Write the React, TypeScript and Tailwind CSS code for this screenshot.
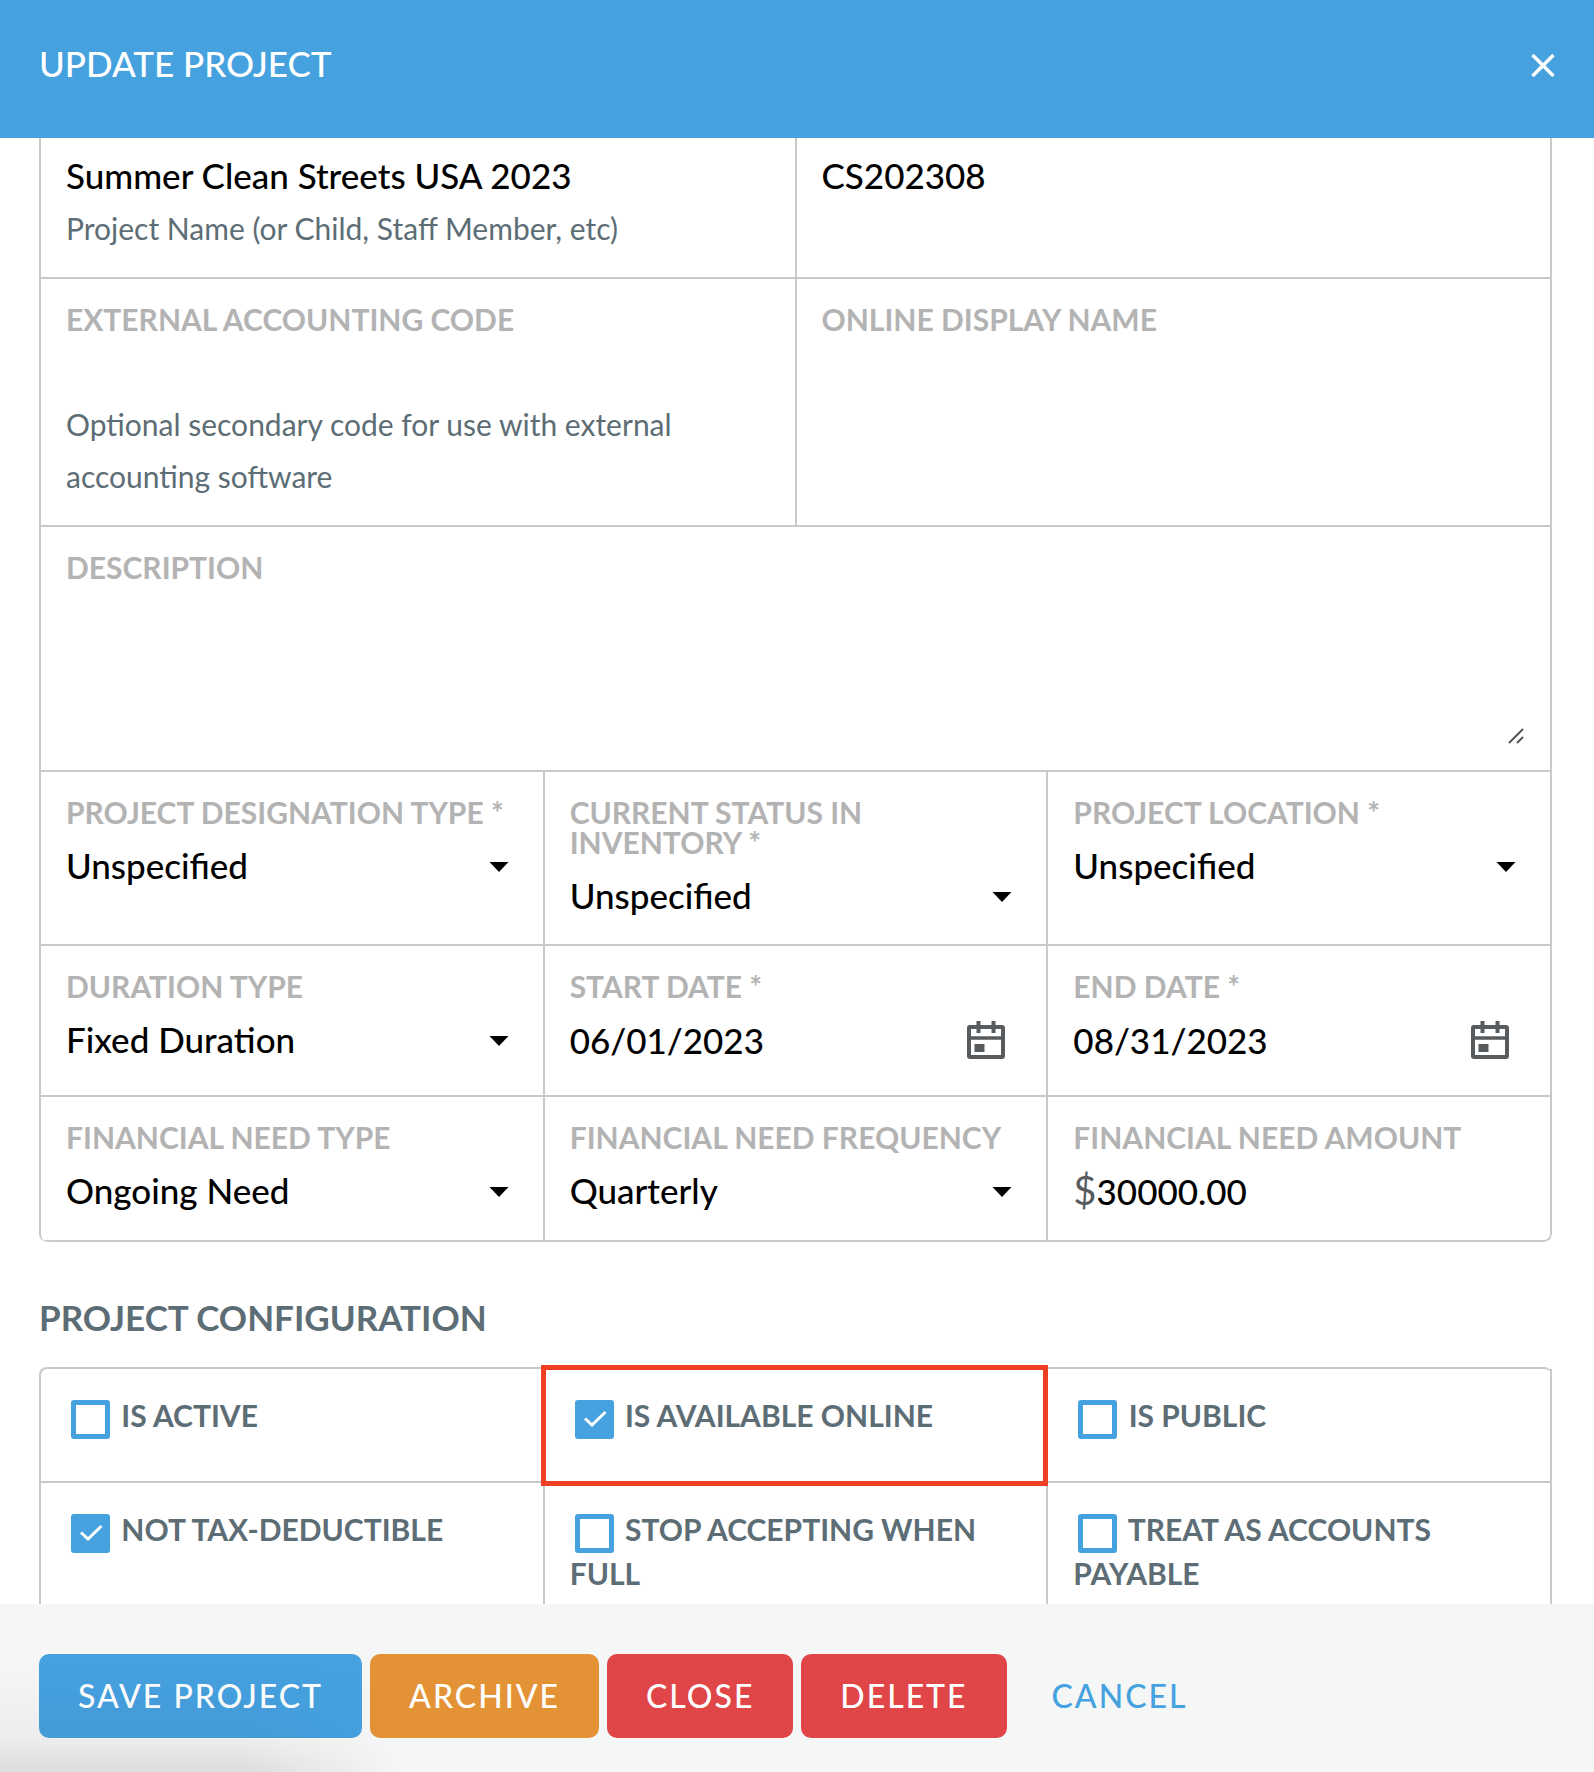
import { useState, type ReactNode } from "react";

const Cell = ({ pad = "pt-[25px] pb-[23px]", children }: { pad?: string; children: ReactNode }) => {
  return (
    <div className={`relative min-w-0 border-r-2 border-b-2 border-[#c9c9c9] px-[25px] ${pad}`}>
      {children}
    </div>
  );
};

const FieldLabel = ({ htmlFor, children }: { htmlFor: string; children: ReactNode }) => {
  return (
    <label htmlFor={htmlFor} className="block text-[30px] leading-[30px] font-bold text-[#b3b3b3] uppercase">
      {children}
    </label>
  );
};

const Help = ({ children }: { children: ReactNode }) => {
  return <p className="text-[30px] leading-[52px] text-[#5d6d75]">{children}</p>;
};

const SelectField = ({ id, label, options }: { id: string; label: string; options: string[] }) => {
  return (
    <Cell>
      <FieldLabel htmlFor={id}>{label}</FieldLabel>
      <div className="relative mt-3">
        <select
          id={id}
          className="block h-[52px] w-full appearance-none bg-transparent text-[35px] leading-[52px] font-medium text-black outline-none"
        >
          {options.map((option) => (
            <option key={option}>{option}</option>
          ))}
        </select>
        <svg
          className="pointer-events-none absolute top-[23px] right-[9px] h-[10px] w-5"
          viewBox="0 0 20 10"
          aria-hidden="true"
        >
          <path d="M0.5 0h19L10 10z" fill="#000" />
        </svg>
      </div>
    </Cell>
  );
};

const DateField = ({ id, label, value }: { id: string; label: string; value: string }) => {
  return (
    <Cell>
      <FieldLabel htmlFor={id}>{label}</FieldLabel>
      <div className="mt-2 mb-[2px] flex h-[61px] items-center pr-[15px]">
        <input
          id={id}
          defaultValue={value}
          className="h-full w-full min-w-0 flex-1 text-[35px] font-medium text-black outline-none"
        />
        <button type="button" aria-label="Open calendar" className="shrink-0">
          <svg className="h-10 w-10" viewBox="0 0 40 40" fill="none" stroke="#575b5e" aria-hidden="true">
            <rect x="3" y="7" width="34" height="30" rx="1" strokeWidth="4" />
            <path d="M3 18h34" strokeWidth="3.5" />
            <path d="M12.5 1v12M27.5 1v12" strokeWidth="4" />
            <rect x="8.5" y="24" width="10" height="8" fill="#575b5e" stroke="none" />
          </svg>
        </button>
      </div>
    </Cell>
  );
};

const CheckField = ({
  id,
  label,
  checked = false,
  highlight = false,
}: {
  id: string;
  label: string;
  checked?: boolean;
  highlight?: boolean;
}) => {
  const [on, setOn] = useState(checked);
  return (
    <Cell pad="pt-6 pb-11">
      <label
        htmlFor={id}
        className="block text-[30px] leading-[44px] font-bold text-[#5d6d75] uppercase"
      >
        <span className="relative -my-2 mr-1 ml-[5px] inline-block h-[39px] w-[39px] align-middle">
          <input
            id={id}
            type="checkbox"
            checked={on}
            onChange={() => setOn(!on)}
            className="block h-full w-full appearance-none rounded-[3px] border-[5px] border-[#46a1df] bg-white checked:bg-[#46a1df]"
          />
          {on && (
            <svg
              className="pointer-events-none absolute inset-0 h-full w-full"
              viewBox="0 0 39 39"
              fill="none"
              stroke="#fff"
              strokeWidth="3"
              aria-hidden="true"
            >
              <path d="M10 18.5l7 6.500L30.500 12" />
            </svg>
          )}
        </span>{" "}
        {label}
      </label>
      {highlight && (
        <div className="pointer-events-none absolute -top-1 -right-[2px] -bottom-[5px] -left-1 z-10 border-[5px] border-[#ed3f24]" />
      )}
    </Cell>
  );
};

const App = () => {
  const actions = [
    { text: "Save Project", color: "bg-[#46a1df]" },
    { text: "Archive", color: "bg-[#e39336]" },
    { text: "Close", color: "bg-[#e04548]" },
    { text: "Delete", color: "bg-[#e04548]" },
  ];

  return (
    <div className="flex h-screen flex-col bg-white font-[Lato,sans-serif]">
      <header className="flex shrink-0 items-center justify-between bg-[#46a1df] pt-9 pr-[38px] pb-[46px] pl-[39px] text-white">
        <h1 className="pb-[2px] text-[35px] leading-[54px] font-medium uppercase">Update Project</h1>
        <button type="button" aria-label="Close dialog">
          <svg className="h-[26px] w-[26px]" viewBox="0 0 26 26" fill="none" stroke="#fff" strokeWidth="3.5" aria-hidden="true">
            <path d="M2.500 4l21 21M23.500 4l-21 21" />
          </svg>
        </button>
      </header>

      <main className="min-h-0 flex-1 overflow-hidden pr-[42px] pl-[39px]">
        <section className="overflow-hidden rounded-b-[8px] border-l-2 border-[#c9c9c9]">
          <div className="grid grid-cols-2">
            <Cell pad="pt-[10px] pb-[23px]">
              <input
                aria-label="Project Name"
                defaultValue="Summer Clean Streets USA 2023"
                className="block h-[54px] w-full text-[35px] font-medium text-black outline-none"
              />
              <Help>Project Name (or Child, Staff Member, etc)</Help>
            </Cell>
            <Cell pad="pt-[10px] pb-[23px]">
              <input
                aria-label="Project Code"
                defaultValue="CS202308"
                className="block h-[54px] w-full text-[35px] font-medium text-black outline-none"
              />
            </Cell>
            <Cell>
              <FieldLabel htmlFor="accounting">External Accounting Code</FieldLabel>
              <input
                id="accounting"
                className="mt-[10px] block h-[54px] w-full text-[35px] font-medium text-black outline-none"
              />
              <Help>Optional secondary code for use with external accounting software</Help>
            </Cell>
            <Cell>
              <FieldLabel htmlFor="display">Online Display Name</FieldLabel>
              <input
                id="display"
                className="mt-[10px] block h-[54px] w-full text-[35px] font-medium text-black outline-none"
              />
            </Cell>
          </div>

          <Cell>
            <FieldLabel htmlFor="description">Description</FieldLabel>
            <div className="relative mt-[10px]">
              <textarea
                id="description"
                className="block h-[155px] w-full resize-none text-[35px] font-medium text-black outline-none"
              />
              <svg
                className="pointer-events-none absolute right-px bottom-[3px] h-4 w-4"
                viewBox="0 0 16 16"
                fill="none"
                stroke="#555"
                strokeWidth="2"
                aria-hidden="true"
              >
                <path d="M1 15L15 1M9 15l6-6" />
              </svg>
            </div>
          </Cell>

          <div className="grid grid-cols-3">
            <SelectField id="designation" label="Project Designation Type *" options={["Unspecified"]} />
            <SelectField id="status" label="Current Status in Inventory *" options={["Unspecified"]} />
            <SelectField id="location" label="Project Location *" options={["Unspecified"]} />
            <SelectField id="duration" label="Duration Type" options={["Fixed Duration", "Ongoing"]} />
            <DateField id="start" label="Start Date *" value="06/01/2023" />
            <DateField id="end" label="End Date *" value="08/31/2023" />
          </div>
          <div className="grid grid-cols-3 overflow-hidden rounded-b-[8px]">
            <SelectField id="need" label="Financial Need Type" options={["Ongoing Need", "One Time"]} />
            <SelectField id="frequency" label="Financial Need Frequency" options={["Quarterly", "Monthly"]} />
            <Cell pad="pt-[25px] pb-[23px] rounded-br-[8px]">
              <FieldLabel htmlFor="amount">Financial Need Amount</FieldLabel>
              <div className="mt-3 flex h-[53px] items-center">
                <span className="text-[40px] leading-[53px] text-[#575b5e]">$</span>
                <input
                  id="amount"
                  defaultValue="30000.00"
                  className="h-full min-w-0 flex-1 text-[35px] font-medium text-black outline-none"
                />
              </div>
            </Cell>
          </div>
        </section>

        <h2 className="mt-12 mb-[23px] text-[35px] leading-[54px] font-bold text-[#5d6d75] uppercase">
          Project Configuration
        </h2>

        <section className="grid grid-cols-3 rounded-t-[8px] border-t-2 border-l-2 border-[#c9c9c9]">
          <CheckField id="active" label="Is Active" />
          <CheckField id="online" label="Is Available Online" checked highlight />
          <CheckField id="public" label="Is Public" />
          <CheckField id="tax" label="Not Tax-Deductible" checked />
          <CheckField id="full" label="Stop Accepting When Full" />
          <CheckField id="payable" label="Treat as Accounts Payable" />
        </section>
      </main>

      <footer className="relative flex shrink-0 gap-2 bg-[#f5f7f6] px-[39px] pt-[50px] pb-[34px]">
        {actions.map((action) => (
          <button
            key={action.text}
            type="button"
            className={`h-[84px] rounded-[10px] px-[39px] text-[32px] font-medium tracking-[2px] text-white uppercase ${action.color}`}
          >
            {action.text}
          </button>
        ))}
        <button
          type="button"
          className="h-[84px] px-[37px] text-[32px] font-medium tracking-[2px] text-[#46a1df] uppercase"
        >
          Cancel
        </button>
        {/* soft shadow in the corner */}
        <div className="pointer-events-none absolute bottom-0 left-0 h-[110px] w-[400px] bg-[linear-gradient(to_top,#0000001a,#00000009_30%,transparent)] [mask-image:linear-gradient(to_right,black_60%,transparent)]" />
      </footer>
    </div>
  );
};

export default App;
